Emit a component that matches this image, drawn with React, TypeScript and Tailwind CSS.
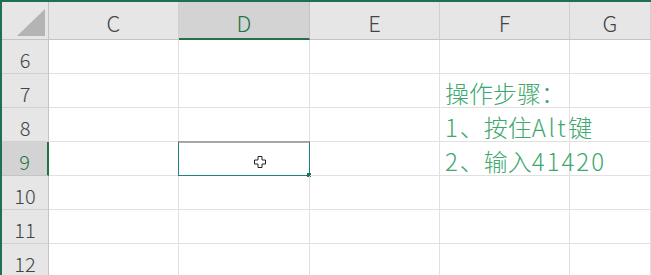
import React from "react";

const cols = ["C", "D", "E", "F", "G"];
const rows = [6, 7, 8, 9, 10, 11, 12];

const notes: Record<number, React.ReactNode> = {
  7: "操作步骤：",
  8: (
    <>
      <span className="tracking-[2px]">1</span>、按住<span className="tracking-[2.5px]">Alt</span>键
    </>
  ),
  9: (
    <>
      <span className="tracking-[2px]">2</span>、输入<span className="tracking-[2px]">41420</span>
    </>
  ),
};

const font = { fontFamily: '"Noto Sans CJK SC", "Noto Sans", sans-serif' };

function Cursor() {
  return (
    <svg width="12" height="12" viewBox="0 0 12 12" className="absolute left-[75px] top-[14px]">
      <path
        d="M4 0.5h4v3.5h3.5v4H8v3.5H4V8H0.5V4H4z"
        fill="#fff"
        stroke="#222"
        strokeWidth="1"
      />
    </svg>
  );
}

export default function App() {
  return (
    <div
      className="w-[651px] h-[275px] overflow-hidden bg-white border-l-2 border-t-2 border-[#1d6f55]"
      style={font}
    >
      <div className="grid grid-cols-[47px_130px_131px_130px_130px_1fr]">
        {/* corner */}
        <div className="h-[38px] bg-[#e6e6e6] border-r border-b border-[#c4c4c4] flex items-end justify-end pr-[3px] pb-[3px]">
          <svg width="28" height="27" viewBox="0 0 28 27">
            <polygon points="0,27 28,27 28,0" fill="#b4b4b4" />
          </svg>
        </div>
        {cols.map((c) => (
          <div
            key={c}
            className={`h-[38px] flex items-center justify-center pt-[3px] text-[22px] leading-none font-light ${
              c === "D"
                ? "bg-[#d3d3d3] text-[#217346] border-r border-[#c4c4c4] border-b-2 border-b-[#217346]"
                : "bg-[#e6e6e6] text-[#444] border-r border-b border-[#d0d0d0] border-b-[#c4c4c4]"
            }`}
          >
            {c}
          </div>
        ))}

        {rows.map((r) => (
          <React.Fragment key={r}>
            <div
              className={`h-[34px] flex items-end justify-center pb-[3px] text-[20px] leading-none font-light border-b ${
                r === 9
                  ? "bg-[#d3d3d3] text-[#217346] border-r-2 border-r-[#217346] border-b-[#c4c4c4]"
                  : "bg-[#e6e6e6] text-[#444] border-r border-[#c4c4c4] border-b-[#d0d0d0]"
              }`}
            >
              {r}
            </div>
            {cols.map((c) => (
              <div
                key={c}
                className="relative h-[34px] border-r border-b border-[#e1e1e1] flex items-end"
              >
                {c === "F" && notes[r] && (
                  <span className="pl-[5px] pb-[2px] text-[24px] leading-none font-light text-[#3ea86e] whitespace-nowrap">
                    {notes[r]}
                  </span>
                )}
                {c === "D" && r === 9 && (
                  <>
                    <div className="absolute -left-px -top-px -right-px -bottom-px border-t-2 border-t-[#a6a6a6] border-l border-r border-b border-[#1f8086]" />
                    <div className="absolute -right-[2px] -bottom-[2px] w-[4px] h-[4px] bg-[#217346]" />
                    <Cursor />
                  </>
                )}
              </div>
            ))}
          </React.Fragment>
        ))}
      </div>
    </div>
  );
}
